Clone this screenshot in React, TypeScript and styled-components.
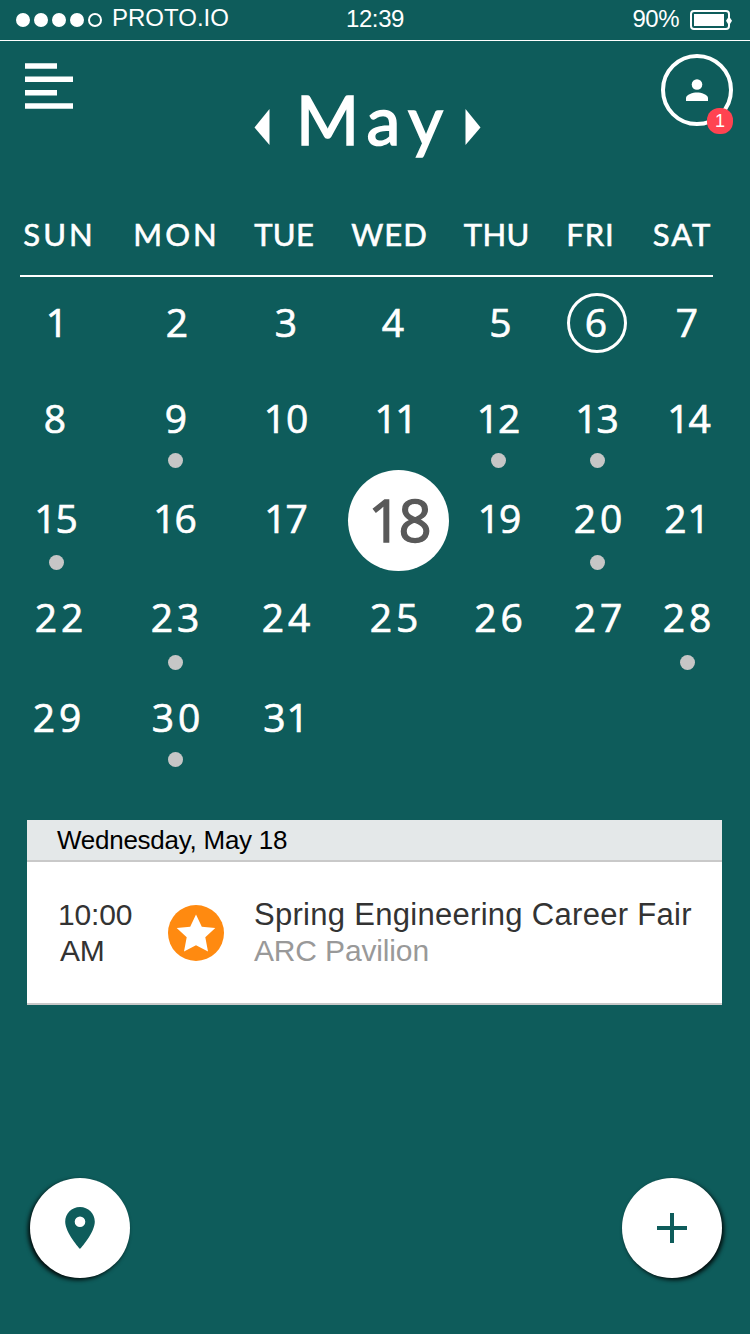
import React from "react";
import styled, { createGlobalStyle } from "styled-components";

const TEAL = "#0e5c5b";

const GlobalStyle = createGlobalStyle`
  *, *::before, *::after { box-sizing: border-box; }
  body { margin: 0; background: ${TEAL}; }
`;

const Screen = styled.main`
  width: 750px;
  height: 1334px;
  overflow: hidden;
  display: flex;
  flex-direction: column;
  background: ${TEAL};
  color: #fff;
  font-family: "Liberation Sans", Arial, sans-serif;
`;

const StatusBar = styled.div`
  flex: none;
  height: 41px;
  display: grid;
  grid-template-columns: 1fr auto 1fr;
  padding: 0 17px 0 16px;
  border-bottom: 1px solid #fff;
  font-size: 24px;
  line-height: 38px;
`;

const Clock = styled.span`
  padding-left: 1px;
  letter-spacing: -0.4px;
`;

const Carrier = styled.div`
  display: flex;
  gap: 4px;
`;

const CarrierName = styled.span`
  margin-left: 6px;
  line-height: 36px;
`;

const SignalDot = styled.span<{ $empty?: boolean }>`
  width: 14px;
  height: 14px;
  margin-top: 13px;
  border-radius: 50%;
  border: 2px solid #fff;
  background: ${(p) => (p.$empty ? "transparent" : "#fff")};
`;

const Power = styled.div`
  display: flex;
  justify-content: flex-end;
  gap: 11px;
  letter-spacing: -0.5px;
  svg { margin-top: 10px; }
`;

const Header = styled.header`
  flex: none;
  height: 164px;
  display: flex;
  justify-content: space-between;
  padding: 13px 17px 0 25px;
`;

const MenuButton = styled.button`
  width: 72px;
  height: 46px;
  margin-top: 9px;
  padding: 0;
  border: 0;
  background: none;
  text-align: left;
`;

const MonthPicker = styled.div`
  display: flex;
  align-items: flex-start;
  margin-right: 23px;
  svg { margin-top: 54px; }
`;

const MonthName = styled.h1`
  margin: 20px 0 0;
  width: 195px;
  padding-left: 26px;
  font: 400 68px/90px Lato, sans-serif;
  letter-spacing: 8.5px;
  white-space: nowrap;
  -webkit-text-stroke: 1.6px #fff;
`;

const Profile = styled.div`
  position: relative;
  width: 72px;
  height: 72px;
  display: grid;
  place-items: center;
  border: 4px solid #fff;
  border-radius: 50%;
`;

const Badge = styled.span`
  position: absolute;
  right: -4px;
  bottom: -12px;
  width: 26px;
  height: 26px;
  border-radius: 12px;
  background: #ff4351;
  font-size: 18px;
  line-height: 26px;
  text-align: center;
`;

const COLUMNS = "112px 126px 96px 120px 89px 108px 72px";

const Weekdays = styled.div`
  flex: none;
  height: 70px;
  display: grid;
  grid-template-columns: ${COLUMNS};
  font: 400 31px/58px Lato, sans-serif;
  -webkit-text-stroke: 0.6px #fff;
`;

const Weekday = styled.span<{ $nudge: number; $track: number }>`
  display: flex;
  justify-content: center;
  margin-left: ${(p) => p.$nudge * 2 + p.$track}px;
  letter-spacing: ${(p) => p.$track}px;
`;

const Rule = styled.hr`
  flex: none;
  width: 693px;
  height: 2px;
  margin: 0 0 15px 20px;
  border: 0;
  background: #fff;
`;

const Weeks = styled.div`
  flex: none;
  height: 528px;
`;

const Week = styled.div<{ $height: number }>`
  display: grid;
  grid-template-columns: ${COLUMNS};
  height: ${(p) => p.$height}px;
`;

const DayCell = styled.div`
  display: flex;
  flex-direction: column;
  align-items: center;
`;

const DayNumber = styled.span<{ $nudge: number; $track: number }>`
  flex: none;
  height: 60px;
  margin-left: ${(p) => p.$nudge * 2 + p.$track}px;
  font: 400 39px/60px "Open Sans", sans-serif;
  letter-spacing: ${(p) => p.$track}px;
  -webkit-text-stroke: 0.7px currentColor;
`;

const Marked = styled(DayNumber)`
  width: 60px;
  margin: 1px 0 0;
  border: 3px solid #fff;
  border-radius: 50%;
  line-height: 52px;
  padding-right: 2px;
  text-align: center;
`;

const Selected = styled(DayNumber)`
  width: 101px;
  height: 101px;
  margin: -18px 0 0 9px;
  border-radius: 50%;
  background: #fff;
  color: #595959;
  font-size: 58px;
  line-height: 99px;
  text-align: center;
  -webkit-text-stroke-width: 1.4px;
`;

const EventDot = styled.i<{ $gap: number }>`
  flex: none;
  width: 15px;
  height: 15px;
  margin: ${(p) => p.$gap}px 0 0;
  border-radius: 50%;
  background: #c6c6c6;
`;

const Agenda = styled.section`
  flex: none;
  width: 695px;
  margin-left: 27px;
  background: #fff;
  border-bottom: 2px solid #c9c9c9;
`;

const AgendaDate = styled.h2`
  height: 42px;
  margin: 0;
  padding-left: 30px;
  border-bottom: 2px solid #c9c9c9;
  background: #e4e8e9;
  color: #000;
  font-size: 26px;
  font-weight: 400;
  line-height: 40px;
  letter-spacing: -0.26px;
`;

const EventRow = styled.div`
  height: 141px;
  display: flex;
  align-items: flex-start;
  padding: 35px 0 0 31px;
  color: #333;
  font-size: 30px;
  line-height: 36px;
  letter-spacing: -0.15px;
`;

const EventTime = styled.div`
  width: 110px;
  div + div { padding-left: 2px; }
`;

const EventInfo = styled.div`
  padding-left: 30px;
`;

const EventTitle = styled.div`
  font-size: 31px;
  letter-spacing: 0.29px;
  white-space: nowrap;
`;

const EventPlace = styled.div`
  color: #999;
`;

const StarIcon = styled.svg`
  margin-top: 8px;
`;

const Actions = styled.footer`
  flex: 1;
  display: flex;
  justify-content: space-between;
  align-items: flex-end;
  padding: 0 28px 56px 30px;
`;

const RoundButton = styled.button<{ $shade: number }>`
  width: 100px;
  height: 100px;
  display: grid;
  place-items: center;
  padding: 0;
  border: 0;
  border-radius: 50%;
  background: #fff;
  box-shadow: ${(p) => p.$shade}px 2px 4px rgba(0, 0, 0, 0.9);
`;

// [label, horizontal nudge, tracking]
const weekdays: [string, number, number][] = [
  ["SUN", 2, 3],
  ["MON", 0, 3],
  ["TUE", -2, 0.3],
  ["WED", -5, 1],
  ["THU", -2, 0.4],
  ["FRI", -7, 1],
  ["SAT", -5.5, 2],
];

type Day = { n: number; nudge?: number; track?: number; dot?: boolean };

const weeks: { height: number; gap: number; days: Day[] }[] = [
  { height: 96, gap: 5, days: [
    { n: 1, nudge: 1 }, { n: 2, nudge: 2 }, { n: 3 }, { n: 4, nudge: -1 },
    { n: 5, nudge: 2 }, { n: 6 }, { n: 7 },
  ] },
  { height: 100, gap: 5, days: [
    { n: 8, nudge: -1 }, { n: 9, nudge: 1, dot: true }, { n: 10, track: 0 }, { n: 11, nudge: 2, track: -1.5 },
    { n: 12, track: -1, dot: true }, { n: 13, track: -1, dot: true }, { n: 14, nudge: 2, track: -1 },
  ] },
  { height: 99, gap: 7, days: [
    { n: 15, track: -1, dot: true }, { n: 16, track: -1 }, { n: 17, track: -1 }, { n: 18, track: -3 },
    { n: 19, nudge: 1, track: -1 }, { n: 20, nudge: 1, track: 4, dot: true }, { n: 21, track: 1 },
  ] },
  { height: 100, gap: 8, days: [
    { n: 22, nudge: 3, track: 4 }, { n: 23, track: 4, dot: true }, { n: 24, track: 4 }, { n: 25, track: 4 },
    { n: 26, track: 4 }, { n: 27, nudge: 1, track: 4 }, { n: 28, track: 4, dot: true },
  ] },
  { height: 133, gap: 5, days: [
    { n: 29, nudge: 1, track: 4 }, { n: 30, nudge: 1, track: 4, dot: true }, { n: 31, track: 1 },
  ] },
];

function DayLabel({ day }: { day: Day }) {
  const Tag = day.n === 6 ? Marked : day.n === 18 ? Selected : DayNumber;
  return <Tag $nudge={day.nudge ?? 0} $track={day.track ?? 0}>{day.n}</Tag>;
}

export default function App() {
  return (
    <Screen>
      <GlobalStyle />
      <StatusBar>
        <Carrier>
          <SignalDot /><SignalDot /><SignalDot /><SignalDot /><SignalDot $empty />
          <CarrierName>PROTO.IO</CarrierName>
        </Carrier>
        <Clock>12:39</Clock>
        <Power>
          <span>90%</span>
          <svg width="43" height="20" viewBox="0 0 43 20">
            <rect x="1" y="1" width="38" height="18" rx="3" fill="none" stroke="#fff" strokeWidth="2" />
            <rect x="4" y="4" width="30" height="12" fill="#fff" />
            <path d="M36 10.700l2-3h2l2 3-2 3.300h-2z" fill="#fff" />
          </svg>
        </Power>
      </StatusBar>

      <Header>
        <MenuButton aria-label="Menu">
          <svg width="48" height="46" viewBox="0 0 48 46" fill="#fff">
            <path d="M0 .3h32v5.500H0zM0 13.400h48v5.500H0zM0 27h32v5.500H0zM0 40.200h48v5.500H0z" />
          </svg>
        </MenuButton>
        <MonthPicker>
          <svg width="16" height="38" viewBox="0 0 16 38"><path d="M15.500 1v36L.5 19.500z" fill="#fff" /></svg>
          <MonthName>May</MonthName>
          <svg width="16" height="38" viewBox="0 0 16 38"><path d="M.5 1v36l15-17.500z" fill="#fff" /></svg>
        </MonthPicker>
        <Profile>
          <svg width="22" height="22" viewBox="0 0 22 22" fill="#fff">
            <circle cx="11" cy="5.5" r="5.3" />
            <path d="M0 22v-3c0-3.500 7-5.500 11-5.500s11 2 11 5.500v3z" />
          </svg>
          <Badge>1</Badge>
        </Profile>
      </Header>

      <Weekdays>
        {weekdays.map(([name, nudge, track]) => (
          <Weekday key={name} $nudge={nudge} $track={track}>{name}</Weekday>
        ))}
      </Weekdays>
      <Rule />
      <Weeks>
        {weeks.map((week) => (
          <Week key={week.days[0].n} $height={week.height}>
            {week.days.map((day) => (
              <DayCell key={day.n}>
                <DayLabel day={day} />
                {day.dot && <EventDot $gap={week.gap} />}
              </DayCell>
            ))}
          </Week>
        ))}
      </Weeks>

      <Agenda>
        <AgendaDate>Wednesday, May 18</AgendaDate>
        <EventRow>
          <EventTime><div>10:00</div><div>AM</div></EventTime>
          <StarIcon width="56" height="56" viewBox="0 0 56 56">
            <circle cx="28" cy="28" r="28" fill="#ff8a10" />
            <path d="M28 9.500l5.800 12.200L47.300 23l-10 9.200L40 46.500l-12-6.200-12 6.200 2.700-14.300-10-9.200 13.500-1.300z" fill="#fff" />
          </StarIcon>
          <EventInfo>
            <EventTitle>Spring Engineering Career Fair</EventTitle>
            <EventPlace>ARC Pavilion</EventPlace>
          </EventInfo>
        </EventRow>
      </Agenda>

      <Actions>
        <RoundButton $shade={-2} aria-label="Location">
          <svg width="30" height="42" viewBox="0 0 30 42">
            <path d="M15 0C6.700 0 .2 6.600.2 14.700.2 25.700 15 42 15 42s14.800-16.300 14.800-27.300C29.800 6.600 23.300 0 15 0zm0 20a5.300 5.300 0 1 1 0-10.600A5.300 5.300 0 0 1 15 20z" fill={TEAL} />
          </svg>
        </RoundButton>
        <RoundButton $shade={2} aria-label="Add">
          <svg width="30" height="30" viewBox="0 0 30 30"><path d="M15 0v30M0 15h30" stroke={TEAL} strokeWidth="4" /></svg>
        </RoundButton>
      </Actions>
    </Screen>
  );
}
